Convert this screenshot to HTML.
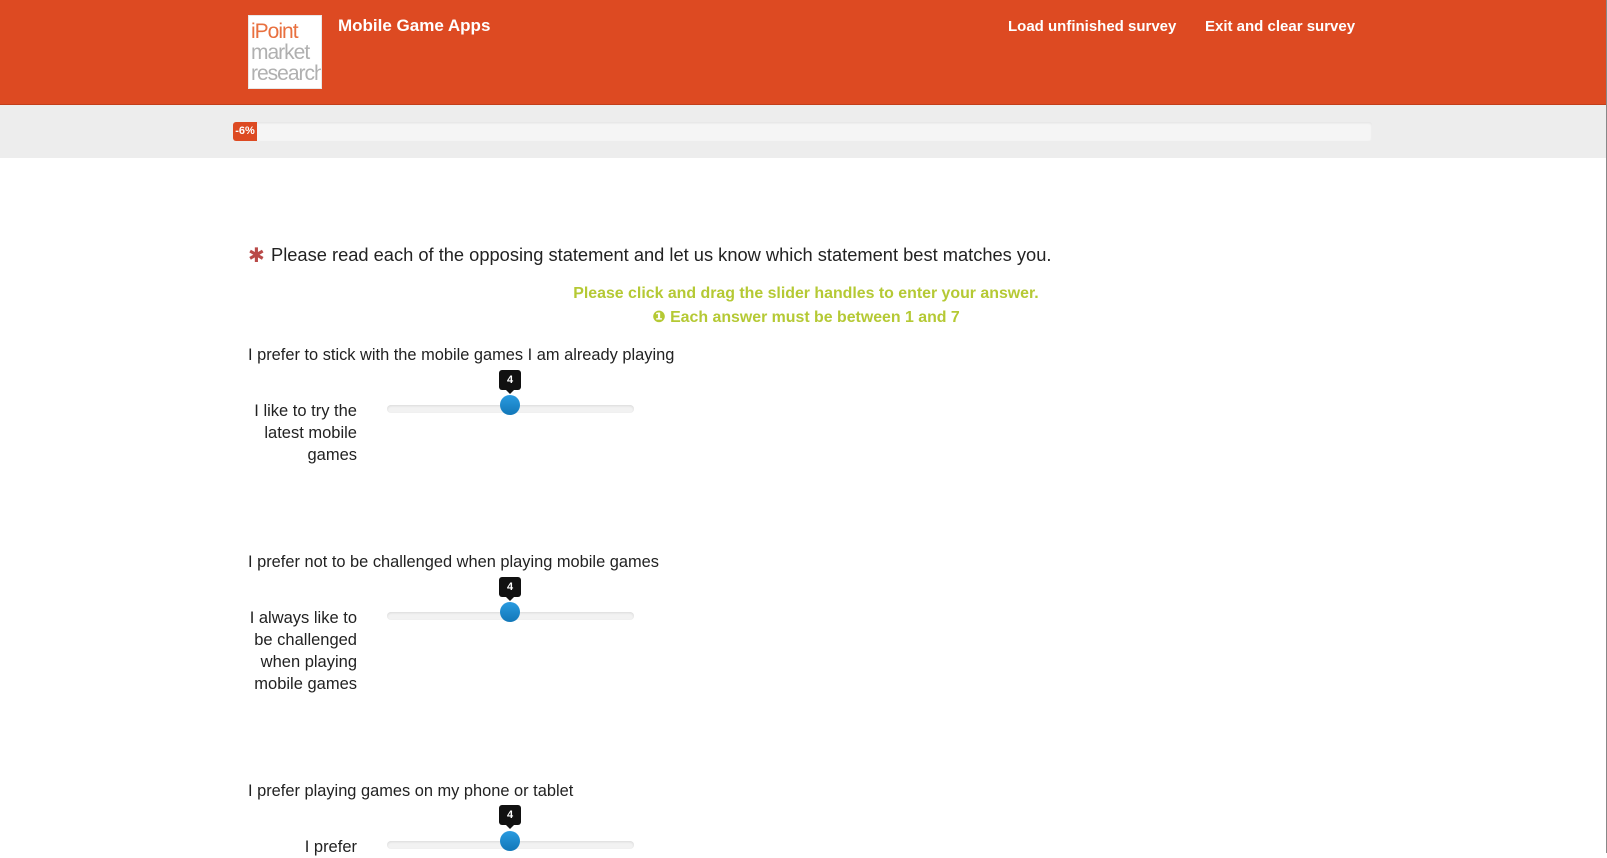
<!DOCTYPE html>
<html><head><meta charset="utf-8"><style>
*{margin:0;padding:0;box-sizing:border-box}
body{width:1607px;height:853px;overflow:hidden;background:#fff;font-family:"Liberation Sans","DejaVu Sans",sans-serif;color:#222;position:relative}
.a{position:absolute;white-space:nowrap}
#hdr{position:absolute;left:0;top:0;width:1606px;height:105px;background:#dd4a22;border-bottom:1px solid #c23e1a}
#band{position:absolute;left:0;top:105px;width:1606px;height:53px;background:#ededed}
#sb{position:absolute;left:1606px;top:0;width:1px;height:853px;background:#888}
.logo{position:absolute;left:248px;top:15px;width:74px;height:74px;background:#fff;border:1px solid #e8e8e8;overflow:hidden;font-family:"Liberation Sans",sans-serif;line-height:21px;padding:5px 0 0 2px;color:#b0b0b0;font-size:21px;letter-spacing:-1px}
.nav{color:#fff;font-weight:bold;font-size:15px;top:18px}
.bar{position:absolute;left:233px;top:122px;width:1139px;height:19px;background:#f5f5f5;border-radius:3px;box-shadow:inset 0 1px 2px rgba(0,0,0,.08)}
.badge{position:absolute;left:233px;top:122px;width:24px;height:19px;background:#dd4a22;color:#fff;font-size:11px;font-weight:bold;text-align:center;line-height:19px;border-radius:3px 0 0 3px}
.stmt{font-size:16.4px;left:248px}
.green{color:#b5c934;font-weight:bold;font-size:15.9px;left:0;width:1612px;text-align:center}
.track{position:absolute;left:387px;width:247px;height:8px;background:#f2f2f2;border-radius:4px;box-shadow:inset 0 1px 2px rgba(0,0,0,.1)}
.h{position:absolute;width:20px;height:20px;border-radius:50%;background:linear-gradient(#2a9be0,#1277b8)}
.tip{position:absolute;width:22px;height:20px;background:#111;color:#fff;font-size:11px;font-weight:bold;text-align:center;line-height:20px;border-radius:3px}
.tip:after{content:"";position:absolute;left:7px;bottom:-4px;border:4px solid transparent;border-bottom:0;border-top-color:#111}
.lab{position:absolute;right:1250px;text-align:right;font-size:16.5px;line-height:22px;white-space:nowrap}
</style></head><body>
<div id="hdr"></div>
<div id="band"></div>
<div id="sb"></div>
<div class="logo"><span style="color:#e8703f">iPoint</span><br>market<br>research</div>
<div class="a" style="left:338px;top:16px;color:#fff;font-weight:bold;font-size:17px">Mobile Game Apps</div>
<div class="a nav" style="left:1008px">Load unfinished survey</div>
<div class="a nav" style="left:1205px">Exit and clear survey</div>
<div class="bar"></div><div class="badge">-6%</div>

<div class="a" style="left:248px;top:243px;color:#b94a48;font-size:20px;font-weight:bold">✱</div>
<div class="a" style="left:271px;top:244px;font-size:18.3px">Please read each of the opposing statement and let us know which statement best matches you.</div>
<div class="a green" style="top:285px">Please click and drag the slider handles to enter your answer.</div>
<div class="a green" style="top:307px">❶ Each answer must be between 1 and 7</div>

<div class="a stmt" style="top:346px">I prefer to stick with the mobile games I am already playing</div>
<div class="tip" style="left:499px;top:370px">4</div>
<div class="track" style="top:405px"></div><div class="h" style="left:500px;top:395px"></div>
<div class="lab" style="top:400px">I like to try the<br>latest mobile<br>games</div>

<div class="a stmt" style="top:553px">I prefer not to be challenged when playing mobile games</div>
<div class="tip" style="left:499px;top:577px">4</div>
<div class="track" style="top:612px"></div><div class="h" style="left:500px;top:602px"></div>
<div class="lab" style="top:607px">I always like to<br>be challenged<br>when playing<br>mobile games</div>

<div class="a stmt" style="top:782px">I prefer playing games on my phone or tablet</div>
<div class="tip" style="left:499px;top:805px">4</div>
<div class="track" style="top:841px"></div><div class="h" style="left:500px;top:831px"></div>
<div class="lab" style="top:836px">I prefer</div>
</body></html>
